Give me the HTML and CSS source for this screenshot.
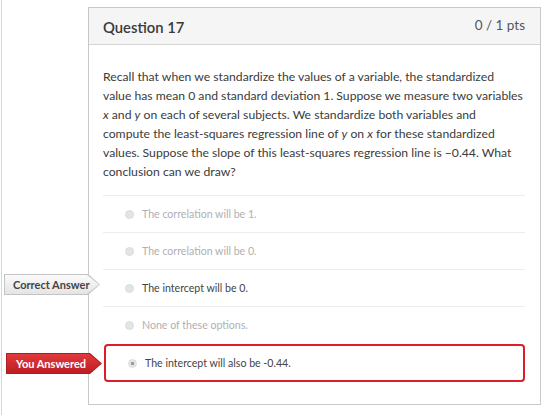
FILE: index.html
```html
<!DOCTYPE html>
<html lang="en">
<head>
    <meta charset="UTF-8">
    <title>Question 17</title>
    <link rel="stylesheet" href="styles.css">
</head>
<body>
<div class="page">
    <div class="question">
        <div class="q-header">
            <h2 class="q-title">Question 17</h2>
            <span class="q-pts">0 / 1 pts</span>
        </div>
        <div class="q-body">
            <p class="q-text">Recall that when we standardize the values of a variable, the standardized value has mean 0 and standard deviation 1. Suppose we measure two variables <em>x</em> and <em>y</em> on each of several subjects. We standardize both variables and compute the least-squares regression line of <em>y</em> on <em>x</em> for these standardized values. Suppose the slope of this least-squares regression line is &minus;0.44. What conclusion can we draw?</p>
            <ul class="answers">
                <li class="answer"><span class="radio"></span>The correlation will be 1.</li>
                <li class="answer"><span class="radio"></span>The correlation will be 0.</li>
                <li class="answer correct">
                    <span class="tag tag-correct"><span class="tag-in">Correct Answer</span></span>
                    <span class="radio"></span>The intercept will be 0.
                </li>
                <li class="answer"><span class="radio"></span>None of these options.</li>
                <li class="answer wrong">
                    <span class="tag tag-wrong"><span class="tag-in">You Answered</span></span>
                    <span class="radio checked"></span>The intercept will also be -0.44.
                </li>
            </ul>
        </div>
    </div>
</div>
</body>
</html>
```

FILE: styles.css
```css
body,h1,h2,h3,p,ul{margin: 0;padding: 0;}
li{list-style: none;}
body{ font-family: Lato, "Open Sans", sans-serif; color: #333; background: #fff; }
.page{ margin-left: 1px; border-left: 1px solid #d6d6d6; min-height: 415px; padding-top: 7px; box-sizing: border-box; }
.question{ margin-left: 86px; width: 453px; border: 1px solid #c8c8c8; box-sizing: border-box; }
.q-header{ display: flex; justify-content: space-between; align-items: center; height: 36px; padding: 0 15px 0 14px;
           background: #f5f5f5; border-bottom: 1px solid #d5d5d5; }
.q-title{ font-size: 14.8px; font-weight: 600; color: #3a3a3a; padding-top: 2px; }
.q-pts{ font-size: 13.5px; color: #555; padding-bottom: 3px; }
.q-body{ padding: 22px 15px 22px 14px; }
.q-text{ font-size: 12.2px; line-height: 19px; color: #3b3b3b; margin-bottom: 14px; width: 421px; }
.q-text em{ font-style: italic; }
.answer{ position: relative; display: flex; align-items: center; height: 37px; border-top: 1px solid #ececec;
         font-size: 10.6px; color: #b0b0b0; box-sizing: border-box; }
.answer .radio{ width: 9px; height: 9px; border-radius: 50%; background: #e4e4e4; border: 1px solid #dcdcdc;
                box-sizing: border-box; margin: 0 8px 0 22px; }
.answer.correct{ color: #444; }
.answer.wrong{ border: 2px solid #d9202a; border-radius: 4px; margin: 1px 0 0 1px; height: 38px; color: #444; }
.answer.wrong .radio{ margin-left: 22px; background: radial-gradient(circle, #9a9a9a 0 1.5px, #e6e6e6 2px); }
.tag{ position: absolute; width: 96px; height: 21px; clip-path: polygon(0 0, 84px 0, 96px 50%, 84px 100%, 0 100%); }
.tag-in{ position: absolute; left: 1px; top: 1px; right: 1px; bottom: 1px; display: flex; align-items: center;
         padding-left: 8px; font-size: 11px; font-weight: 700;
         clip-path: polygon(0 0, 82px 0, 94px 50%, 82px 100%, 0 100%); }
.tag-correct{ left: -99px; top: 4px; background: #c4c4c4; }
.tag-correct .tag-in{ background: linear-gradient(#fbfbfb, #e4e4e4); color: #444; }
.tag-wrong{ left: -100px; top: 7px; background: #b01c20; }
.tag-wrong .tag-in{ background: linear-gradient(#e2393c, #bd1e22); color: #fff; padding-left: 9px; }
```
